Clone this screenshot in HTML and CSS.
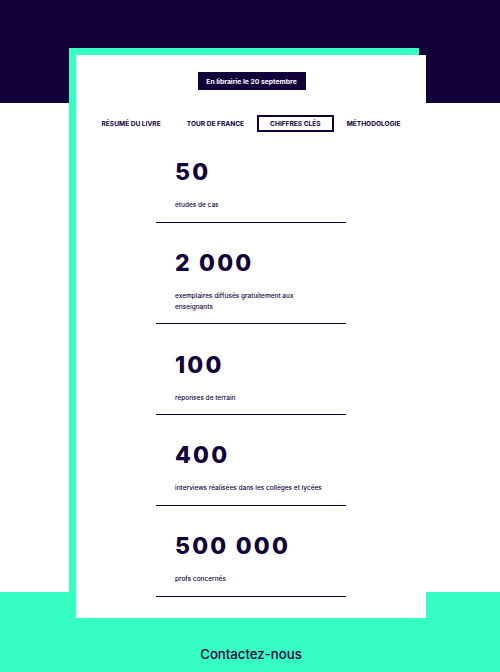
FILE: index.html
```html
<!DOCTYPE html>
<html lang="fr">
<head>
<meta charset="utf-8">
<link rel="stylesheet" href="styles.css">
</head>
<body>
<div class="page">
  <div class="hero-band"></div>
  <div class="footer-band">
    <p class="contact">Contactez-nous</p>
  </div>
  <div class="card-wrap">
    <div class="card-accent"></div>
    <div class="card">
      <div class="badge">En librairie le 20 septembre</div>
      <nav class="tabs">
        <span class="tab">Résumé du livre</span>
        <span class="tab">Tour de France</span>
        <span class="tab active">Chiffres clés</span>
        <span class="tab">Méthodologie</span>
      </nav>
      <div class="stats">
        <div class="stat">
          <div class="num">50</div>
          <div class="label">études de cas</div>
        </div>
        <div class="stat">
          <div class="num">2 000</div>
          <div class="label">exemplaires diffusés gratuitement aux<br>enseignants</div>
        </div>
        <div class="stat">
          <div class="num">100</div>
          <div class="label">réponses de terrain</div>
        </div>
        <div class="stat">
          <div class="num">400</div>
          <div class="label">interviews réalisées dans les collèges et lycées</div>
        </div>
        <div class="stat">
          <div class="num">500 000</div>
          <div class="label">profs concernés</div>
        </div>
      </div>
    </div>
  </div>
</div>
</body>
</html>
```
FILE: styles.css
```css
* { box-sizing: border-box; }
html, body { margin: 0; padding: 0; }
body {
  width: 500px;
  height: 672px;
  overflow: hidden;
  background: #ffffff;
  font-family: Inter, "Noto Sans", sans-serif;
  color: #12003b;
}
.page {
  position: relative;
  width: 500px;
  height: 672px;
}
.hero-band {
  height: 103px;
  background: #12003b;
}
.footer-band {
  position: absolute;
  left: 0;
  right: 0;
  top: 592px;
  height: 80px;
  background: #36ffc3;
  display: flex;
  align-items: flex-end;
  justify-content: center;
}
.contact {
  margin: 0 0 10px 2px;
  font-size: 13.2px;
  font-weight: 500;
  color: #12003b;
}
.card-wrap {
  position: absolute;
  left: 76px;
  top: 55px;
  width: 350px;
}
.card-accent {
  position: absolute;
  left: -7px;
  top: -7px;
  width: 350px;
  height: 600px;
  background: #36ffc3;
}
.card {
  position: relative;
  background: #ffffff;
  height: 563px;
  padding-top: 17px;
  display: flex;
  flex-direction: column;
  align-items: center;
}
.badge {
  background: #12003b;
  color: #ffffff;
  font-size: 6.8px;
  font-weight: 700;
  height: 18px;
  width: 108px;
  display: flex;
  align-items: center;
  justify-content: center;
  margin-left: 1px;
}
.tabs {
  margin-top: 25px;
  display: flex;
  align-items: center;
  white-space: nowrap;
}
.tab {
  font-size: 6.6px;
  font-weight: 700;
  text-transform: uppercase;
  padding: 0 11px;
  height: 17px;
  display: flex;
  align-items: center;
  border: 2px solid transparent;
}
.tab.active {
  border-color: #12003b;
}
.stats {
  width: 190px;
  margin-top: 16px;
}
.stat {
  border-bottom: 1.5px solid #12003b;
  padding-left: 19px;
}
.num {
  font-size: 23px;
  font-weight: 800;
  line-height: 26px;
  padding-top: 27.3px;
  letter-spacing: 2.2px;
}
.stat:first-child .num { padding-top: 11px; }
.label {
  font-size: 6.5px;
  line-height: 11px;
  margin-top: 15px;
  padding-bottom: 10.5px;
  font-weight: 500;
}
```
